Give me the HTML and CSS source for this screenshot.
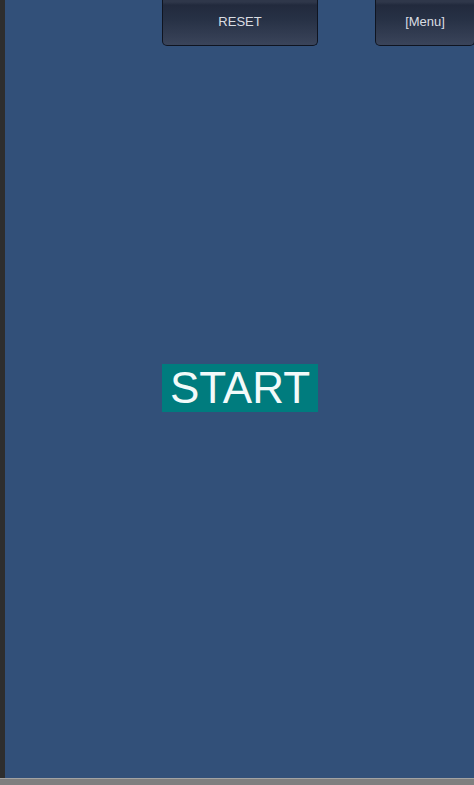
FILE: index.html
```html
<!DOCTYPE html>
<html>
<head>
<meta charset="utf-8">
<link rel="stylesheet" href="styles.css">
</head>
<body>
<div class="page">
  <div class="body-row">
    <div class="strip"></div>
    <div class="main">
      <div class="topbar">
        <div class="btn btn-reset">RESET</div>
        <div class="btn btn-menu">[Menu]</div>
      </div>
      <div class="start">START</div>
    </div>
  </div>
  <div class="footer"></div>
</div>
</body>
</html>
```

FILE: styles.css
```css
html, body {
  margin: 0;
  padding: 0;
  width: 474px;
  height: 785px;
  overflow: hidden;
  font-family: "Liberation Sans", Arial, sans-serif;
}
.page {
  display: flex;
  flex-direction: column;
  height: 785px;
}
.body-row {
  display: flex;
  flex: 1;
  min-height: 0;
}
.strip {
  width: 5px;
  background: #2e2e2e;
}
.main {
  flex: 1;
  background: #325079;
  display: grid;
  grid-template: 1fr / 1fr;
  overflow: hidden;
}
.topbar {
  grid-area: 1 / 1;
  align-self: start;
  display: flex;
  gap: 57px;
  padding-left: 157px;
}
.btn {
  box-sizing: border-box;
  height: 46px;
  border: 1px solid #0f1420;
  border-top: none;
  border-radius: 0 0 5px 5px;
  background: linear-gradient(#2f374a 0, #2f374a 2px, #222a3d 5px, #263044 40%, #3a445a 100%);
  color: #dadde2;
  font-size: 13px;
  display: flex;
  align-items: center;
  justify-content: center;
  padding-bottom: 3px;
  flex-shrink: 0;
}
.btn-reset {
  width: 156px;
}
.btn-menu {
  width: 100px;
}
.start {
  grid-area: 1 / 1;
  align-self: center;
  justify-self: center;
  width: 156px;
  height: 48px;
  margin-bottom: 2px;
  background: #007c7e;
  color: #f2fafa;
  font-size: 44px;
  line-height: 48px;
  text-align: center;
}
.footer {
  height: 6px;
  border-top: 1px solid #a2a2a2;
  background: #7f7f7f;
}
```
